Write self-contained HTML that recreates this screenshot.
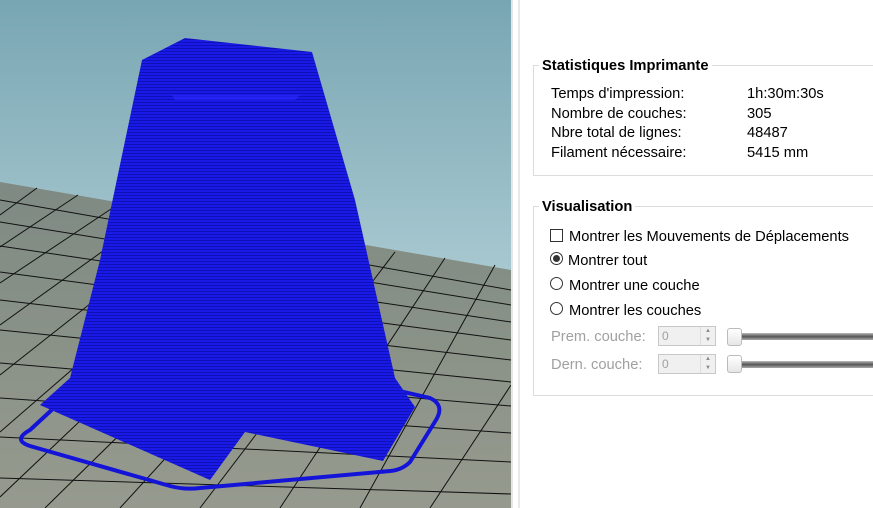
<!DOCTYPE html>
<html><head><meta charset="utf-8"><style>
*{margin:0;padding:0;box-sizing:border-box}
body{width:873px;height:508px;overflow:hidden;background:#fff;font-family:"Segoe UI","Liberation Sans",sans-serif;font-size:14.7px;color:#000;position:relative}
.a{position:absolute;white-space:nowrap}
.box{position:absolute;border:1px solid #dcdcdc;border-right:none}
.t{position:absolute;background:#fff;font-weight:bold;font-size:14.7px;padding:0 3px}
.g{color:#a0a0a0}
.spin{position:absolute;width:58px;height:20px;border:1px solid #c8c8c8;background:#f0f0f0;font-size:12px;color:#a0a0a0;padding-left:3px;line-height:18px}
.spin i{position:absolute;right:0;top:0;width:15px;height:18px;border-left:1px solid #ddd;font-style:normal;font-size:6px;line-height:9px;text-align:center;color:#888}
.trk{position:absolute;left:740px;width:133px;height:7px;background:linear-gradient(#bbb,#555 50%,#aaa)}
.th{position:absolute;left:727px;width:15px;height:18px;border:1px solid #bbb;border-radius:3px;background:linear-gradient(#fff,#e6e6e6)}
.rad{position:absolute;left:550px;width:13px;height:13px;border:1px solid #333;border-radius:50%;background:#fff}
</style></head><body>
<svg class="a" style="left:0;top:0" width="511" height="508">
<defs>
<linearGradient id="sky" x1="0" y1="0" x2="0" y2="1"><stop offset="0" stop-color="#78a6b3"/><stop offset="1" stop-color="#a8c8d0"/></linearGradient>
<linearGradient id="gr" x1="0" y1="0" x2="0" y2="1"><stop offset="0" stop-color="#7e8a82"/><stop offset="1" stop-color="#969a8e"/></linearGradient>
<pattern id="st" width="4" height="3" patternUnits="userSpaceOnUse"><rect width="4" height="3" fill="#1a1ae6"/><rect width="4" height="1" fill="#1010b8"/></pattern>
</defs>
<rect width="511" height="272" fill="url(#sky)"/>
<polygon points="0,182 511,270 511,508 0,508" fill="url(#gr)"/>
<g stroke="#111" stroke-width="1" fill="none">
<line x1="0" y1="200" x2="511" y2="290"/><line x1="0" y1="222" x2="511" y2="305"/><line x1="0" y1="246" x2="511" y2="322"/><line x1="0" y1="272" x2="511" y2="340"/><line x1="0" y1="300" x2="511" y2="360"/><line x1="0" y1="330" x2="511" y2="382"/><line x1="0" y1="363" x2="511" y2="406"/><line x1="0" y1="398" x2="511" y2="433"/><line x1="0" y1="437" x2="511" y2="462"/><line x1="0" y1="478" x2="511" y2="494"/>
<line x1="0" y1="215" x2="37" y2="188"/><line x1="0" y1="247" x2="78" y2="195"/><line x1="0" y1="283" x2="120" y2="203"/><line x1="0" y1="325" x2="160" y2="210"/><line x1="0" y1="375" x2="200" y2="217"/><line x1="0" y1="432" x2="240" y2="224"/><line x1="0" y1="497" x2="280" y2="231"/><line x1="45" y1="508" x2="320" y2="238"/><line x1="120" y1="508" x2="360" y2="245"/><line x1="200" y1="508" x2="395" y2="252"/><line x1="280" y1="508" x2="445" y2="258"/><line x1="360" y1="508" x2="495" y2="265"/><line x1="430" y1="508" x2="511" y2="385"/>
</g>
<path d="M30,430 L70,393 Q78,386 90,387 L395,390 L430,398 Q445,405 436,420 L410,462 Q402,470 390,471 L200,488 Q185,490 170,486 L30,446 Q12,440 30,430 Z" fill="none" stroke="#1414d8" stroke-width="4"/>
<polygon points="142,60 185,38 312,52 355,200 395,378 415,407 383,461 245,432 210,480 40,405 70,378 100,260" fill="url(#st)"/>
<polygon points="172,95 300,95 295,100 175,100" fill="#2a2aff" opacity=".6"/>
</svg>
<div class="a" style="left:511px;top:0;width:2px;height:508px;background:#e6e6e6"></div>
<div class="a" style="left:518px;top:0;width:2px;height:508px;background:#e8e8e8"></div>

<div class="box" style="left:533px;top:65px;width:340px;height:111px"></div>
<div class="t" style="left:539px;top:58px">Statistiques Imprimante</div>
<div class="a" style="left:551px;top:86px">Temps d'impression:</div><div class="a" style="left:747px;top:86px">1h:30m:30s</div>
<div class="a" style="left:551px;top:106px">Nombre de couches:</div><div class="a" style="left:747px;top:106px">305</div>
<div class="a" style="left:551px;top:125px">Nbre total de lignes:</div><div class="a" style="left:747px;top:125px">48487</div>
<div class="a" style="left:551px;top:145px">Filament nécessaire:</div><div class="a" style="left:747px;top:145px">5415 mm</div>

<div class="box" style="left:533px;top:206px;width:340px;height:190px"></div>
<div class="t" style="left:539px;top:199px">Visualisation</div>
<div class="a" style="left:550px;top:229px;width:13px;height:13px;border:1px solid #333;background:#fff"></div>
<div class="a" style="left:569px;top:229px">Montrer les Mouvements de Déplacements</div>
<div class="rad" style="top:252px"><div class="a" style="left:2px;top:2px;width:7px;height:7px;border-radius:50%;background:#333"></div></div>
<div class="a" style="left:568px;top:253px">Montrer tout</div>
<div class="rad" style="top:277px"></div><div class="a" style="left:569px;top:278px">Montrer une couche</div>
<div class="rad" style="top:302px"></div><div class="a" style="left:569px;top:303px">Montrer les couches</div>
<div class="a g" style="left:551px;top:329px">Prem. couche:</div>
<div class="spin" style="left:658px;top:326px">0<i>▲<br>▼</i></div>
<div class="trk" style="top:333px"></div><div class="th" style="top:328px"></div>
<div class="a g" style="left:551px;top:357px">Dern. couche:</div>
<div class="spin" style="left:658px;top:354px">0<i>▲<br>▼</i></div>
<div class="trk" style="top:361px"></div><div class="th" style="top:355px"></div>
</body></html>
